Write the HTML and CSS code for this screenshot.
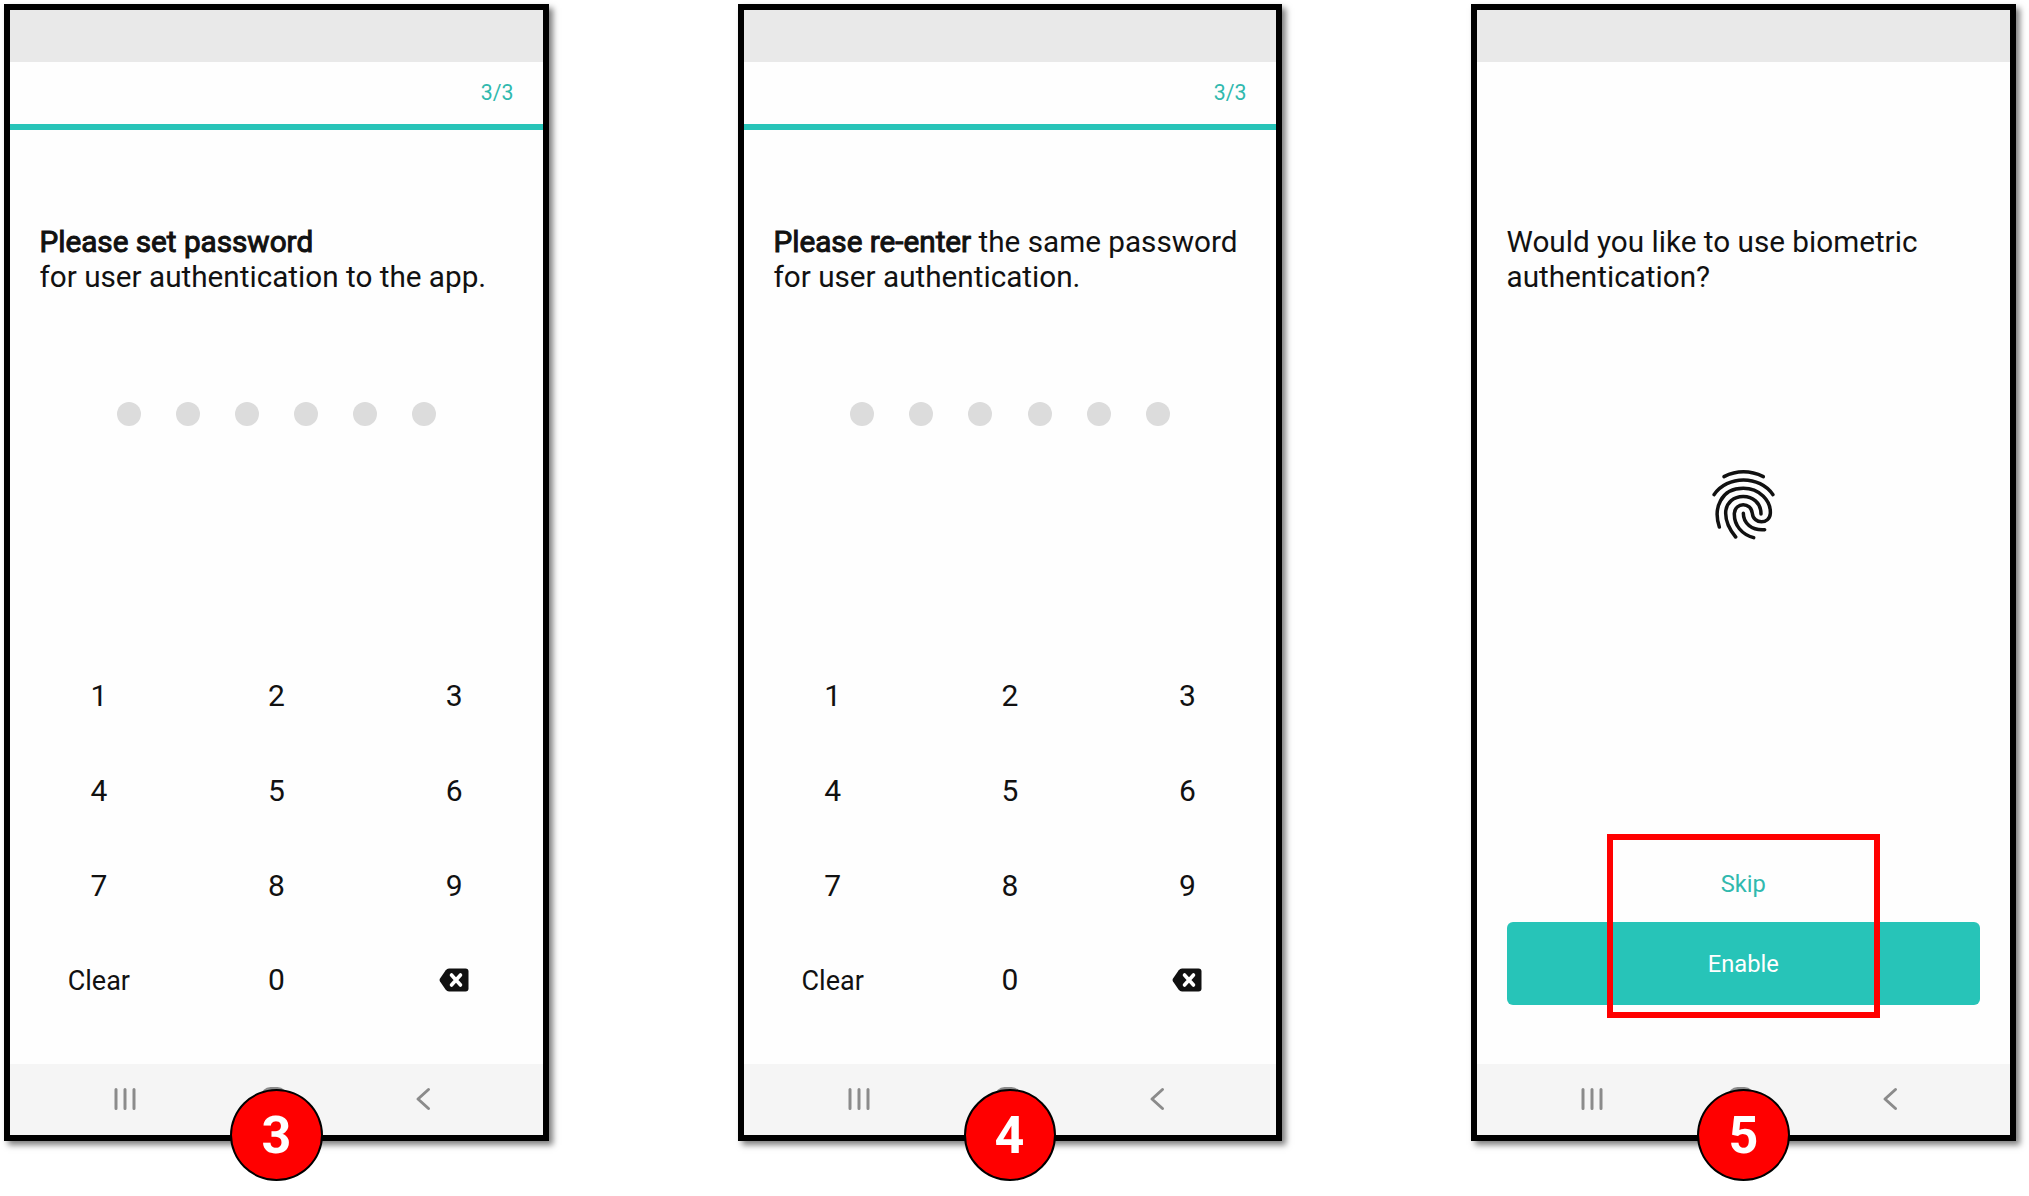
FILE: index.html
```html
<!DOCTYPE html>
<html lang="en">
<head>
<meta charset="utf-8">
<title>App setup</title>
<link rel="stylesheet" href="styles.css">
</head>
<body>
<svg class="defs" aria-hidden="true">
  <symbol id="recents" viewBox="0 0 22 24"><path d="M2 2.500V21.500M11 2.500V21.500M20 2.500V21.500" fill="none" stroke="#8b8b8b" stroke-width="3" stroke-linecap="round"/></symbol>
  <symbol id="home" viewBox="0 0 26 26"><rect x="1.500" y="1.500" width="23" height="23" rx="8" fill="none" stroke="#8b8b8b" stroke-width="3"/></symbol>
  <symbol id="back" viewBox="0 0 16 24"><path d="M13.500 2.500L3 12L13.500 21.500" fill="none" stroke="#8b8b8b" stroke-width="3" stroke-linecap="round" stroke-linejoin="round"/></symbol>
  <symbol id="erase" viewBox="0 0 30 24"><path d="M10 .5H26.500Q29.500 .5 29.500 3.500V20.500Q29.500 23.500 26.500 23.500H10Q8 23.500 6.500 21.500L1 13.500Q0 12 1 10.500L6.500 2.500Q8 .5 10 .5Z" fill="#111"/><path d="M12.500 7L21.500 17M21.500 7L12.500 17" stroke="#fff" stroke-width="3.600" stroke-linecap="round"/></symbol>
</svg>
<main class="board">
  <section class="phone">
    <div class="status"></div>
    <header class="steps">3/3</header>
    <div class="content">
      <h1 class="prompt"><span class="strong">Please set password</span><br>for user authentication to the app.</h1>
      <div class="dots"><i></i><i></i><i></i><i></i><i></i><i></i></div>
      <div class="keypad">
        <span>1</span><span>2</span><span>3</span><span>4</span><span>5</span><span>6</span><span>7</span><span>8</span><span>9</span><span class="clear">Clear</span><span>0</span><span><svg class="erase"><use href="#erase"/></svg></span>
      </div>
    </div>
    <nav class="nav"><svg class="recents"><use href="#recents"/></svg><svg class="home"><use href="#home"/></svg><svg class="back"><use href="#back"/></svg></nav>
    <div class="badge">3</div>
  </section>
  <section class="phone">
    <div class="status"></div>
    <header class="steps">3/3</header>
    <div class="content">
      <h1 class="prompt"><span class="strong">Please re-enter</span> the same password<br>for user authentication.</h1>
      <div class="dots"><i></i><i></i><i></i><i></i><i></i><i></i></div>
      <div class="keypad">
        <span>1</span><span>2</span><span>3</span><span>4</span><span>5</span><span>6</span><span>7</span><span>8</span><span>9</span><span class="clear">Clear</span><span>0</span><span><svg class="erase"><use href="#erase"/></svg></span>
      </div>
    </div>
    <nav class="nav"><svg class="recents"><use href="#recents"/></svg><svg class="home"><use href="#home"/></svg><svg class="back"><use href="#back"/></svg></nav>
    <div class="badge">4</div>
  </section>
  <section class="phone">
    <div class="status"></div>
    <div class="content biometric">
      <h1 class="prompt">Would you like to use biometric<br>authentication?</h1>
      <svg class="finger" viewBox="0 0 330 330" fill="none" stroke="#111" stroke-width="10.500" stroke-linecap="round">
        <path d="M102 80Q160 51 220 80"/>
        <path d="M72 134C112 75 209 75 249 134"/>
        <path d="M88 231C69 174 93 115 160 115C208 115 243 152 241 190C239 224 190 224 187 190C184 156 135 156 133 190C132 226 155 253 191 263"/>
        <path d="M137 261C116 236 107 216 107 190C107 122 213 122 213 192"/>
        <path d="M160 190C160 220 185 242 224 239"/>
      </svg>
      <div class="actions">
        <button class="skip">Skip</button>
        <button class="enable">Enable</button>
        <div class="marker"></div>
      </div>
    </div>
    <nav class="nav"><svg class="recents"><use href="#recents"/></svg><svg class="home"><use href="#home"/></svg><svg class="back"><use href="#back"/></svg></nav>
    <div class="badge">5</div>
  </section>
</main>
</body>
</html>
```
FILE: styles.css
```css
* { box-sizing: border-box; }
body { margin: 0; background: #fff; color: #111; font-family: Roboto, sans-serif; height: 1196px; overflow: hidden; }
.defs { display: none; }
.board { display: flex; gap: 189px; padding: 4px 0 0 4px; }
.phone { position: relative; display: flex; flex-direction: column; flex: none; width: 545px; height: 1137px; border: 6px solid #000; background: #fefefe; box-shadow: 4px 4px 6px rgba(0, 0, 0, .5); }
.phone:nth-child(2) { width: 544px; }
.status { height: 52px; background: #e9e9e9; flex: none; }
.steps { height: 68px; flex: none; border-bottom: 6px solid #27c4b8; padding: 0 29.500px 1px 0; display: flex; align-items: center; justify-content: flex-end; color: #31b9ae; font-size: 21.300px; }
.content { flex: 1; display: flex; flex-direction: column; padding-top: 94px; }
.biometric { padding-top: 162px; }
.prompt { margin: 0 0 0 29.500px; font-size: 29.700px; line-height: 35px; font-weight: 400; white-space: nowrap; }
.strong { -webkit-text-stroke: 1px #111; }
.dots { display: flex; justify-content: center; gap: 35.200px; margin-top: 108px; }
.dots i { width: 24px; height: 24px; border-radius: 50%; background: #dcdcdc; }
.keypad { display: grid; grid-template-columns: repeat(3, 1fr); grid-auto-rows: 94.700px; margin-top: 222.500px; }
.keypad span { display: flex; align-items: center; justify-content: center; font-size: 30px; }
.keypad .clear { font-size: 27px; padding-top: 2px; }
.erase { width: 30px; height: 24px; }
.nav { height: 71px; flex: none; background: #f5f5f5; display: flex; padding: 23px 0 0 103.500px; align-items: flex-start; }
.recents { width: 22px; height: 24px; }
.home { width: 26px; height: 26px; margin-left: 125px; }
.back { width: 16px; height: 24px; margin-left: 128px; }
.badge { position: absolute; left: 220px; top: 1079px; width: 93px; height: 92px; border: 2px solid #000; border-radius: 50%; background: #f00; color: #fff; display: flex; align-items: center; justify-content: center; font: bold 52px Roboto, sans-serif; }
.phone:nth-child(2) .badge { left: 219.500px; width: 92px; }
.finger { width: 110px; height: 110px; margin: 156px 0 0 213px; flex: none; }
.actions { position: relative; margin: 298px 30px 0 29.500px; display: flex; flex-direction: column; }
button { border: 0; padding: 0; background: none; font: 23.700px Roboto, sans-serif; }
.skip { color: #31b9ae; height: 52px; }
.enable { margin-top: 12px; height: 83px; border-radius: 6px; background: #27c4b8; color: #fff; }
.marker { position: absolute; left: 100.500px; top: -24px; width: 273px; height: 184px; border: 6px solid #f00; }
```
